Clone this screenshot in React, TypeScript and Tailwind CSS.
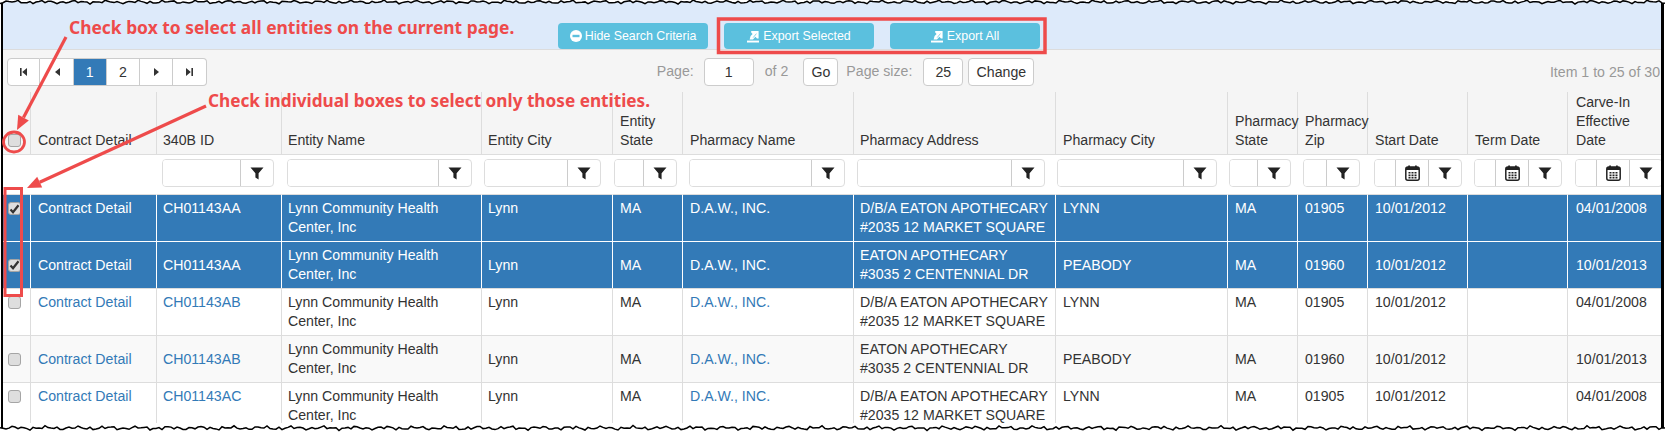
import React from "react";

const Filter = () => (
  <svg width="14" height="15" viewBox="0 0 14 15"><path d="M0.5 1.5H13.5L8.6 7.2V13.6L5.4 11.6V7.2Z" fill="#222" /></svg>
);

const Calendar = () => (
  <svg width="15" height="16" viewBox="0 0 15 16">
    <rect x="0.8" y="2" width="13.4" height="13.2" rx="2" fill="#fff" stroke="#222" strokeWidth="1.5" />
    <rect x="1" y="2" width="13" height="3" fill="#222" />
    <rect x="3.2" y="0.5" width="1.8" height="3" fill="#222" />
    <rect x="10" y="0.5" width="1.8" height="3" fill="#222" />
    <path d="M3.5 7h2v1.6h-2zM6.5 7h2v1.6h-2zM9.5 7h2v1.6h-2zM3.5 9.4h2V11h-2zM6.5 9.4h2V11h-2zM9.5 9.4h2V11h-2zM3.5 11.8h2v1.6h-2zM6.5 11.8h2v1.6h-2zM9.5 11.8h2v1.6h-2z" fill="#222" />
  </svg>
);

const ExportIcon = () => (
  <svg width="12" height="13" viewBox="0 0 12 13" className="mr-[4px]">
    <rect x="0" y="10.6" width="12" height="1.9" fill="#fff" />
    <path d="M2.6 9.4L3.6 6L5.6 3.9L4.2 2.4L4.2 1H11.6V8.4H10L8.4 6.8L6 9.4Z" fill="#fff" />
    <path d="M6.2 7.6L9.4 3.6" stroke="#5bc0de" strokeWidth="0.7" fill="none" />
  </svg>
);

const MinusCircle = () => (
  <svg width="12" height="12" viewBox="0 0 12 12" className="mr-[3px]">
    <circle cx="6" cy="6" r="6" fill="#fff" />
    <rect x="2.5" y="4.8" width="7" height="2.4" fill="#5bc0de" />
  </svg>
);

const PagerGlyph = ({ kind }: { kind: "first" | "prev" | "next" | "last" }) => {
  const d = {
    first: "M1 1H2.6V9H1ZM8 1V9L3.2 5Z",
    prev: "M8 1V9L3 5Z",
    next: "M2 1V9L7 5Z",
    last: "M1 1V9L5.8 5ZM6.4 1H8V9H6.4Z",
  }[kind];
  return (
    <svg width="9" height="10" viewBox="0 0 9 10"><path d={d} fill="#333" /></svg>
  );
};

const Checkbox = ({ checked }: { checked?: boolean }) => (
  <span className="flex h-[13px] w-[13px] items-center justify-center rounded-[3px] border border-[#a5a5a5] bg-[#dedede]">
    {checked && (
      <svg width="11" height="10" viewBox="0 0 11 10"><path d="M1.5 5.5L4 8.2L9.5 1.2" stroke="#333" strokeWidth="2.2" fill="none" /></svg>
    )}
  </span>
);

const colClasses = [
  "w-[27px]", "w-[126px]", "w-[125px]", "w-[200px]", "w-[131px]", "w-[70px]", "w-[171px]",
  "w-[202px]", "w-[172px]", "w-[70px]", "w-[70px]", "w-[100px]", "w-[100px]", "w-[120px]",
];

const pads = [
  "pl-[5px]", "pl-[7px]", "pl-[6px]", "pl-[6px]", "pl-[6px]", "pl-[7px]", "pl-[7px]",
  "pl-[6px]", "pl-[7px]", "pl-[7px]", "pl-[7px]", "pl-[7px]", "pl-[7px]", "pl-[8px]",
];

const headers: string[][] = [
  [], ["Contract Detail"], ["340B ID"], ["Entity Name"], ["Entity City"], ["Entity", "State"],
  ["Pharmacy Name"], ["Pharmacy Address"], ["Pharmacy City"], ["Pharmacy", "State"],
  ["Pharmacy", "Zip"], ["Start Date"], ["Term Date"], ["Carve-In", "Effective", "Date"],
];

const filters: (null | { cls: string; cal?: boolean })[] = [
  null,
  null,
  { cls: "ml-[6px] w-[112px]" },
  { cls: "ml-[6px] w-[185px]" },
  { cls: "ml-[3px] w-[117px]" },
  { cls: "ml-[2px] w-[63px]" },
  { cls: "ml-[7px] w-[156px]" },
  { cls: "ml-[4px] w-[188px]" },
  { cls: "ml-[2px] w-[160px]" },
  { cls: "ml-[2px] w-[62px]" },
  { cls: "ml-[6px] w-[57px]" },
  { cls: "ml-[7px] w-[88px]", cal: true },
  { cls: "ml-[7px] w-[88px]", cal: true },
  { cls: "ml-[8px] w-[88px]", cal: true },
];

type Row = {
  id: string; addr: string[]; pcity: string; zip: string; carve: string;
  selected?: boolean; middle?: boolean; stripe?: boolean;
};

const rows: Row[] = [
  { id: "CH01143AA", addr: ["D/B/A EATON APOTHECARY", "#2035 12 MARKET SQUARE"], pcity: "LYNN", zip: "01905", carve: "04/01/2008", selected: true },
  { id: "CH01143AA", addr: ["EATON APOTHECARY", "#3035 2 CENTENNIAL DR"], pcity: "PEABODY", zip: "01960", carve: "10/01/2013", selected: true, middle: true },
  { id: "CH01143AB", addr: ["D/B/A EATON APOTHECARY", "#2035 12 MARKET SQUARE"], pcity: "LYNN", zip: "01905", carve: "04/01/2008" },
  { id: "CH01143AB", addr: ["EATON APOTHECARY", "#3035 2 CENTENNIAL DR"], pcity: "PEABODY", zip: "01960", carve: "10/01/2013", middle: true, stripe: true },
  { id: "CH01143AC", addr: ["D/B/A EATON APOTHECARY", "#2035 12 MARKET SQUARE"], pcity: "LYNN", zip: "01905", carve: "04/01/2008" },
];

function jag(base: number, amp: number, seed: number) {
  const pts: string[] = [];
  for (let x = 0, i = 0; x <= 1666; x += 3, i++) {
    const n = Math.sin(i * 1.7 + seed) + Math.sin(i * 0.61 + seed * 2) * 0.8 + Math.sin(i * 3.3 + seed * 3) * 0.6;
    pts.push(`${x},${(base + (n / 2.3) * amp).toFixed(1)}`);
  }
  return pts;
}

const PagerBtn = ({ children, active, cls }: { children: React.ReactNode; active?: boolean; cls?: string }) => (
  <span className={`flex h-[28px] w-[33.3px] items-center justify-center border-y border-r border-[#ccc] ${active ? "border-[#337ab7] bg-[#337ab7] text-white" : "bg-white text-[#333]"} ${cls ?? ""}`}>
    {children}
  </span>
);

export default function App() {
  const top = jag(2, 2, 1);
  const bottom = jag(428, 2.4, 4);
  return (
    <div className="relative h-[433px] w-[1666px] overflow-hidden bg-white pl-px font-['Liberation_Sans',Arial,sans-serif] text-[14.15px] leading-[19px] text-[#333]">
      <div className="h-[428px] w-[1663px] overflow-hidden border-x-0 border-l-2 border-r-[3px] border-solid border-black bg-white">
        {/* Blue band */}
        <div className="flex h-[50px] items-end border-b border-[#dcdcdc] bg-[#ddeafa] pl-[555px]">
          <button className="flex h-[26px] w-[150px] items-center justify-center rounded-[4px] bg-[#5bc0de] text-[12.4px] text-white">
            <MinusCircle />Hide Search Criteria
          </button>
          <button className="ml-[16px] flex h-[26px] w-[150px] items-center justify-center rounded-[4px] bg-[#5bc0de] text-[12.4px] text-white">
            <ExportIcon />Export Selected
          </button>
          <button className="ml-[16px] flex h-[26px] w-[150px] items-center justify-center rounded-[4px] bg-[#5bc0de] text-[12.4px] text-white">
            <ExportIcon />Export All
          </button>
        </div>

        {/* Pager toolbar */}
        <div className="flex h-[42px] items-start bg-[#f5f5f5] pl-[4px] pt-[8px]">
          <div className="flex">
            <PagerBtn cls="rounded-l-[4px] border-l"><PagerGlyph kind="first" /></PagerBtn>
            <PagerBtn><PagerGlyph kind="prev" /></PagerBtn>
            <PagerBtn active>1</PagerBtn>
            <PagerBtn>2</PagerBtn>
            <PagerBtn><PagerGlyph kind="next" /></PagerBtn>
            <PagerBtn cls="rounded-r-[4px]"><PagerGlyph kind="last" /></PagerBtn>
          </div>
          <div className="ml-[450px] flex h-[28px] items-center text-[#999]">
            <span className="-mt-[2px]">Page:</span>
            <input readOnly value="1" className="ml-[10px] h-[28px] w-[50px] rounded-[4px] border border-[#ccc] bg-white text-center text-[#333] outline-none" />
            <span className="ml-[11px] -mt-[2px]">of 2</span>
            <span className="ml-[15px] flex h-[28px] w-[35px] items-center justify-center rounded-[4px] border border-[#ccc] bg-white text-[#333]">Go</span>
            <span className="ml-[8px] -mt-[2px]">Page size:</span>
            <input readOnly value="25" className="ml-[11px] h-[28px] w-[40px] rounded-[4px] border border-[#ccc] bg-white text-center text-[#333] outline-none" />
            <span className="ml-[5px] flex h-[28px] w-[66px] items-center justify-center rounded-[4px] border border-[#ccc] bg-white text-[#333]">Change</span>
          </div>
          <span className="ml-auto mt-[5px] pr-[1px] text-[#999]">Item 1 to 25 of 30</span>
        </div>

        {/* Grid */}
        <div className="h-[331px] overflow-hidden">
          <table className="w-[1684px] table-fixed border-separate border-spacing-0">
            <colgroup>
              {colClasses.map((c, i) => <col key={i} className={c} />)}
            </colgroup>
            <thead>
              <tr className="h-[63px] bg-[#f5f5f5]">
                {headers.map((h, i) => (
                  <th key={i} className={`h-[63px] border-b border-[#ddd] pb-[4px] pr-0 text-left align-bottom font-normal ${pads[i]} ${i === 0 ? "" : "border-l"}`}>
                    {i === 0 ? (
                      <span className="flex h-[19px] items-center"><Checkbox /></span>
                    ) : (
                      h.map((l) => <div key={l} className="whitespace-nowrap">{l}</div>)
                    )}
                  </th>
                ))}
              </tr>
              <tr className="h-[39px] bg-white">
                {filters.map((f, i) => (
                  <td key={i} className="h-[39px] p-0 pt-[4px] align-top">
                    {f && (
                      <div className={`flex h-[28px] overflow-hidden rounded-[4px] border border-[#ddd] bg-white ${f.cls}`}>
                        <input readOnly className="h-full min-w-0 flex-1 bg-white outline-none" />
                        {f.cal && (
                          <span className="flex w-[33px] shrink-0 items-center justify-center border-l border-[#ccc]"><Calendar /></span>
                        )}
                        <span className="flex w-[33px] shrink-0 items-center justify-center border-l border-[#ccc]"><Filter /></span>
                      </div>
                    )}
                  </td>
                ))}
              </tr>
            </thead>
            <tbody>
              {rows.map((r, ri) => {
                const sel = r.selected;
                const bg = sel ? "bg-[#337ab7] text-white" : r.stripe ? "bg-[#f9f9f9]" : "bg-white";
                const topB = sel && ri > 0 ? "border-white" : "border-[#ddd]";
                const leftB = sel ? "border-l-white" : "border-l-[#ddd]";
                const va = r.middle ? "align-middle" : "align-top";
                const link = sel ? "" : "text-[#337ab7]";
                const td = `h-[47px] border-t ${topB} border-l ${leftB} py-[4px] pr-0 ${va} whitespace-nowrap`;
                return (
                  <tr key={ri} className={bg}>
                    <td className={`h-[47px] border-t ${topB} py-[4px] pr-0 ${pads[0]} ${va}`}>
                      <span className="flex h-[19px] items-center"><Checkbox checked={sel} /></span>
                    </td>
                    <td className={`${td} ${pads[1]} ${link}`}>Contract Detail</td>
                    <td className={`${td} ${pads[2]} ${link}`}>{r.id}</td>
                    <td className={`${td} ${pads[3]}`}>Lynn Community Health<br />Center, Inc</td>
                    <td className={`${td} ${pads[4]}`}>Lynn</td>
                    <td className={`${td} ${pads[5]}`}>MA</td>
                    <td className={`${td} ${pads[6]} ${link}`}>D.A.W., INC.</td>
                    <td className={`${td} ${pads[7]}`}>{r.addr[0]}<br />{r.addr[1]}</td>
                    <td className={`${td} ${pads[8]}`}>{r.pcity}</td>
                    <td className={`${td} ${pads[9]}`}>MA</td>
                    <td className={`${td} ${pads[10]}`}>{r.zip}</td>
                    <td className={`${td} ${pads[11]}`}>10/01/2012</td>
                    <td className={`${td} ${pads[12]}`}></td>
                    <td className={`${td} ${pads[13]}`}>{r.carve}</td>
                  </tr>
                );
              })}
            </tbody>
          </table>
        </div>
      </div>

      {/* Torn edges */}
      <svg className="pointer-events-none absolute left-0 top-0" width="1666" height="433" viewBox="0 0 1666 433">
        <polygon points={`0,0 ${top.join(" ")} 1666,0`} fill="#fff" />
        <polyline points={top.join(" ")} fill="none" stroke="#000" strokeWidth="1.5" />
        <polygon points={`0,433 ${bottom.join(" ")} 1666,433`} fill="#fff" />
        <polyline points={bottom.join(" ")} fill="none" stroke="#000" strokeWidth="1.5" />
        {/* Annotation marks */}
        <g stroke="#ee4b4b" fill="none">
          <rect x="718.5" y="19" width="326.5" height="33.5" strokeWidth="3.5" />
          <rect x="5" y="188.5" width="16.5" height="107" strokeWidth="3" />
          <ellipse cx="14" cy="142" rx="10.5" ry="10" strokeWidth="2.8" />
          <line x1="66" y1="37" x2="23.5" y2="117.6" strokeWidth="3.2" />
          <line x1="206" y1="106" x2="39.7" y2="182.2" strokeWidth="3.2" />
        </g>
        <polygon points="17,130 28.8,120.4 18.2,114.8" fill="#ee4b4b" />
        <polygon points="27,188 42.2,187.6 37.2,176.8" fill="#ee4b4b" />
      </svg>

      <span className="absolute left-[69px] top-[16px] whitespace-nowrap font-['Noto_Sans',sans-serif] text-[17.4px] font-bold leading-[22px] text-[#ee4b4b]">
        Check box to select all entities on the current page.
      </span>
      <span className="absolute left-[208px] top-[90px] whitespace-nowrap font-['Noto_Sans',sans-serif] text-[17.2px] font-bold leading-[22px] text-[#ee4b4b]">
        Check individual boxes to select only those entities.
      </span>
    </div>
  );
}
